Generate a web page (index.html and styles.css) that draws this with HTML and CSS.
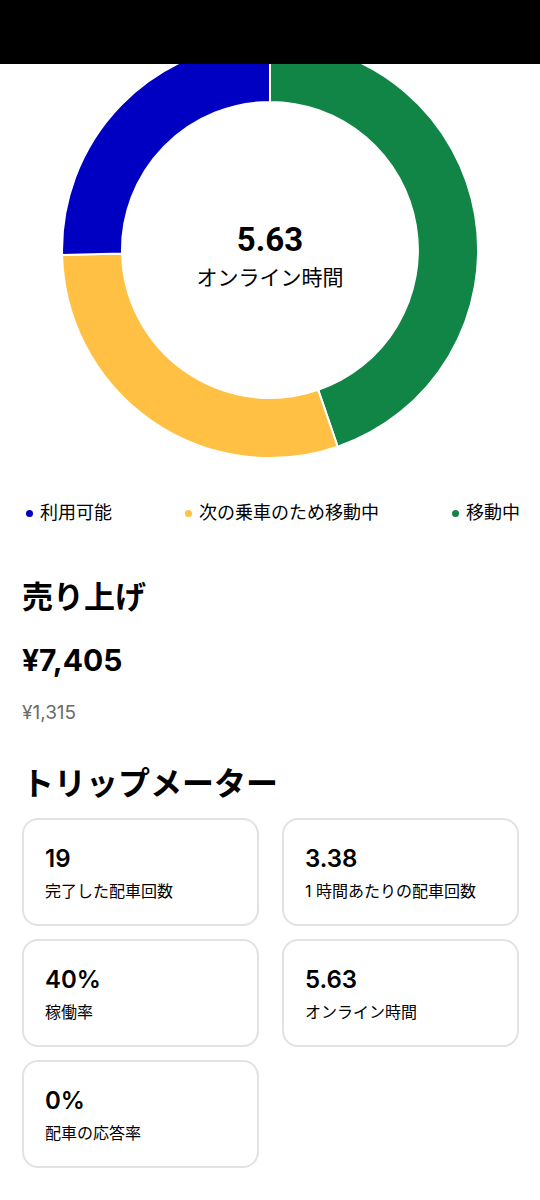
FILE: index.html
```html
<!DOCTYPE html>
<html lang="ja">
<head>
    <meta charset="utf-8" />
    <title>トリップメーター</title>
    <link rel="stylesheet" href="styles.css">
</head>
<body>
    <div class="top_bar"></div>

    <div class="chart_box">
        <svg class="donut" width="540" height="416" viewBox="0 64 540 416" xmlns="http://www.w3.org/2000/svg">
            <g stroke="#ffffff" stroke-width="2" stroke-linejoin="round">
                <!-- 移動中 -->
                <path fill="#118546" d="M 270 42 A 208 208 0 0 1 337.7 446.7 L 318.2 389.9 A 148 148 0 0 0 270 102 Z"></path>
                <!-- 次の乗車のため移動中 -->
                <path fill="#FFC043" d="M 337.7 446.7 A 208 208 0 0 1 62.1 255.1 L 122 253.6 A 148 148 0 0 0 318.2 389.9 Z"></path>
                <!-- 利用可能 -->
                <path fill="#0000C2" d="M 62.1 255.1 A 208 208 0 0 1 270 42 L 270 102 A 148 148 0 0 0 122 253.6 Z"></path>
            </g>
        </svg>
        <div class="chart_center">
            <div class="chart_value">5.63</div>
            <div class="chart_label">オンライン時間</div>
        </div>
    </div>

    <div class="legend">
        <span class="legend_item"><i class="dot dot_blue"></i>利用可能</span>
        <span class="legend_item"><i class="dot dot_yellow"></i>次の乗車のため移動中</span>
        <span class="legend_item"><i class="dot dot_green"></i>移動中</span>
    </div>

    <div class="section">
        <h2 class="section_title">売り上げ</h2>
        <div class="earn_total">¥7,405</div>
        <div class="earn_sub">¥1,315</div>
    </div>

    <div class="section">
        <h2 class="section_title trip_title">トリップメーター</h2>
        <div class="card_grid">
            <div class="stat_card">
                <div class="stat_value">19</div>
                <div class="stat_label">完了した配車回数</div>
            </div>
            <div class="stat_card">
                <div class="stat_value">3.38</div>
                <div class="stat_label">1 時間あたりの配車回数</div>
            </div>
            <div class="stat_card">
                <div class="stat_value">40%</div>
                <div class="stat_label">稼働率</div>
            </div>
            <div class="stat_card">
                <div class="stat_value">5.63</div>
                <div class="stat_label">オンライン時間</div>
            </div>
            <div class="stat_card">
                <div class="stat_value">0%</div>
                <div class="stat_label">配車の応答率</div>
            </div>
        </div>
    </div>
</body>
</html>
```

FILE: styles.css
```css
html,
body {
    margin: 0;
    padding: 0;
    background: #ffffff;
    color: #000000;
    font-family: "Inter", "Noto Sans CJK JP", sans-serif;
}

.top_bar {
    height: 64px;
    background: #000000;
}

/* ドーナツグラフ */
.chart_box {
    position: relative;
    height: 416px;
}

.donut {
    display: block;
}

.chart_center {
    position: absolute;
    left: 0;
    right: 0;
    top: 156px;
    text-align: center;
}

.chart_value {
    font-family: "Roboto", "Noto Sans CJK JP", sans-serif;
    font-weight: 700;
    font-size: 33px;
    line-height: 40px;
}

.chart_label {
    font-family: "Roboto", "Noto Sans CJK JP", sans-serif;
    font-size: 21px;
    line-height: 28px;
    margin-top: 4px;
}

.legend {
    display: flex;
    justify-content: space-between;
    padding: 21px 20px 0 26px;
    font-size: 18px;
    line-height: 24px;
}

.legend_item {
    display: flex;
    align-items: center;
}

.dot {
    width: 7px;
    height: 7px;
    border-radius: 50%;
    margin-right: 7px;
}

.dot_blue {
    background: #0000C2;
}

.dot_yellow {
    background: #FFC043;
}

.dot_green {
    background: #118546;
}

.section {
    padding: 0 21px 0 22px;
}

.section_title {
    margin: 52px 0 0 0;
    font-size: 31px;
    line-height: 40px;
    font-weight: 700;
}

.earn_total {
    margin-top: 23px;
    font-size: 30px;
    line-height: 40px;
    font-weight: 700;
}

.earn_sub {
    margin-top: 21px;
    font-size: 19px;
    line-height: 24px;
    color: #6b6b6b;
}

.trip_title {
    margin-top: 39px;
    font-size: 32px;
}

.card_grid {
    display: grid;
    grid-template-columns: 1fr 1fr;
    column-gap: 23px;
    row-gap: 13px;
    margin-top: 14px;
}

.stat_card {
    height: 108px;
    box-sizing: border-box;
    border: 2px solid #e2e2e2;
    border-radius: 16px;
    padding: 24px 20px 0 21px;
}

.stat_value {
    font-size: 24px;
    line-height: 30px;
    font-weight: 600;
}

.stat_label {
    margin-top: 7px;
    font-size: 16px;
    line-height: 21px;
}
```
